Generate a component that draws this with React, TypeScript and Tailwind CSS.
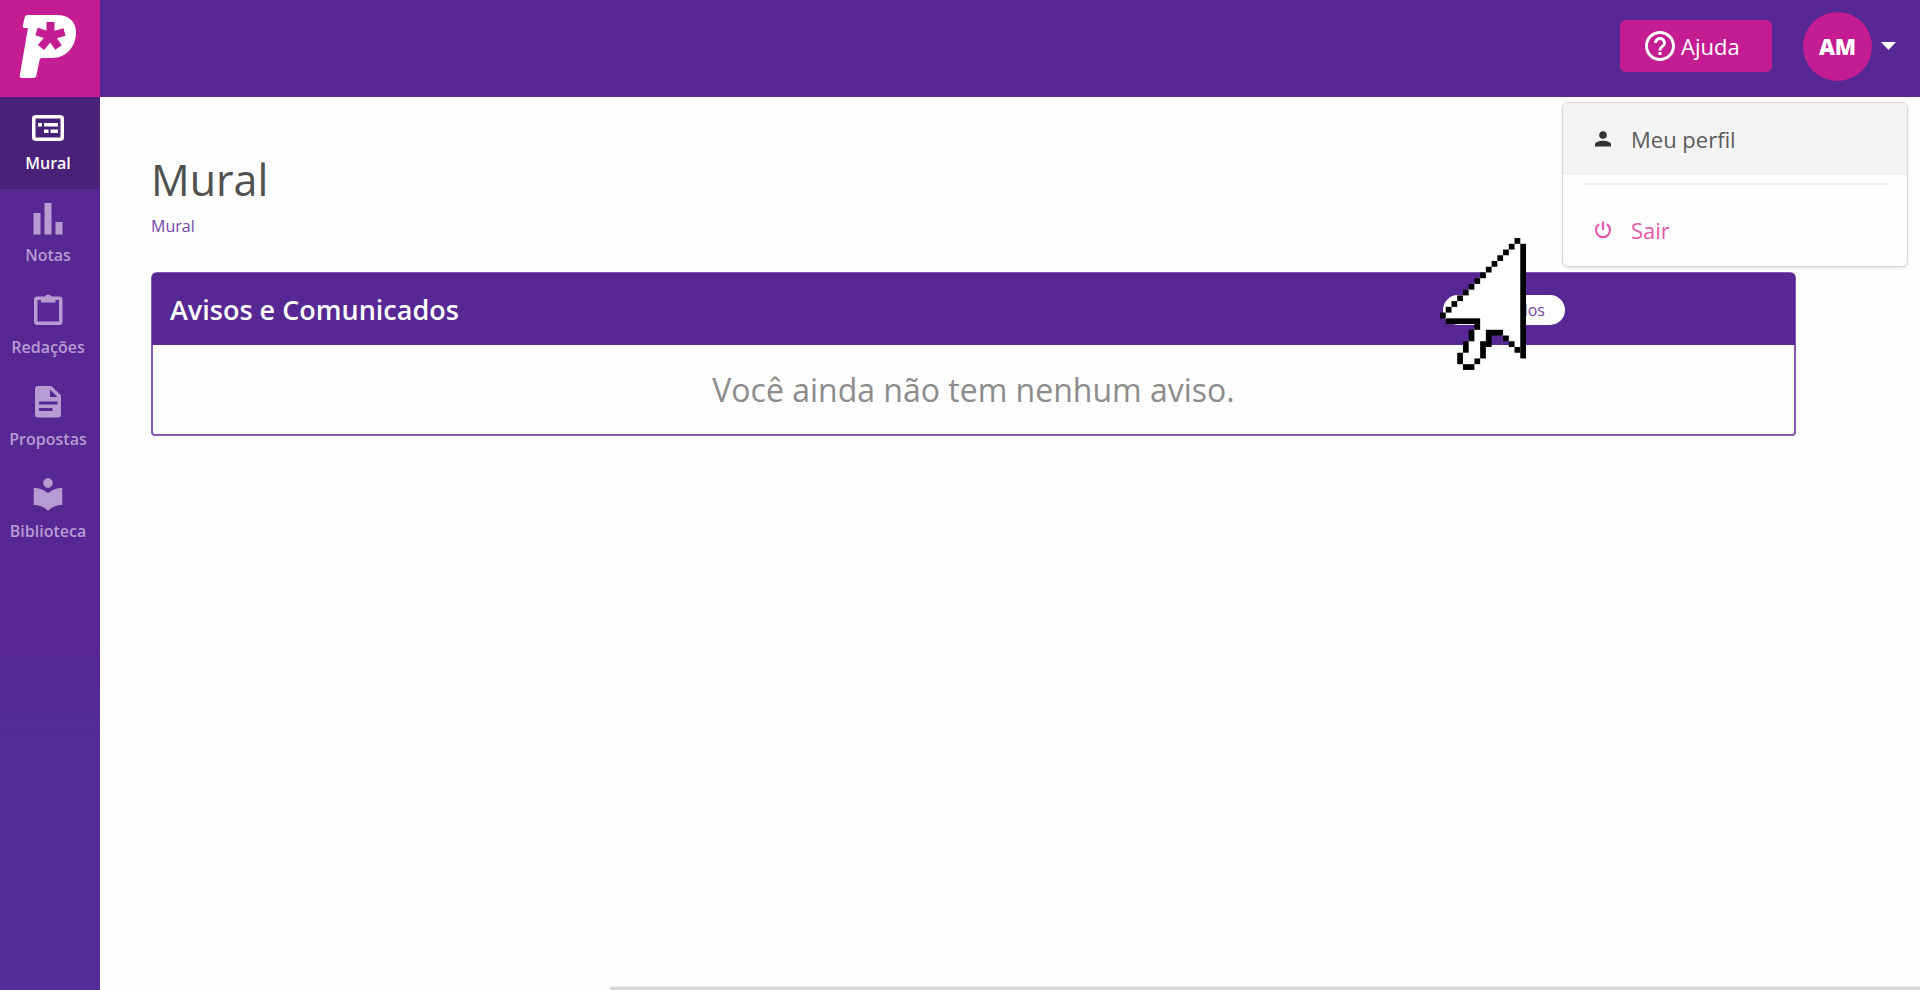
import type { ReactNode } from 'react';
import { MdLocalLibrary, MdHelpOutline } from 'react-icons/md';

const CURSOR_PIXELS: [number, number, number, number][] = [
  ...Array.from({ length: 14 }, (_, row): [number, number, number, number] => [13 - row, row, 1, 1]),
  [14, 1, 1, 20],
  [1, 14, 6, 1],
  [6, 15, 1, 1],
  [5, 16, 1, 2],
  [4, 18, 1, 2],
  [3, 20, 1, 2],
  [4, 22, 2, 1],
  [6, 21, 1, 1],
  [7, 18, 1, 3],
  [8, 16, 1, 3],
  [9, 16, 2, 1],
  [11, 17, 1, 1],
  [12, 18, 1, 1],
  [13, 19, 1, 1],
];

function PixelCursor() {
  return (
    <svg
      className="pointer-events-none absolute top-[238px] right-[394px] z-20 h-[132px] w-[86px]"
      viewBox="0 0 15 23"
      aria-hidden="true"
    >
      <path
        fill="#fff"
        stroke="#fff"
        strokeWidth="0.2"
        d="M13 1L14 1V19H13V18H12V17H11V16H8V18H7V21H6V22H4V20H5V18H6V16H7V14H1V13Z"
      />
      {CURSOR_PIXELS.map(([x, y, w, h]) => (
        <rect key={`${x}-${y}`} x={x} y={y} width={w} height={h} fill="#000" />
      ))}
    </svg>
  );
}

function Logo() {
  return (
    <svg className="h-[97px] w-[100px]" viewBox="0 0 100 97" role="img" aria-label="Logo">
      <path
        fill="#fff"
        d="M28 15H57C69 15 76 22 76 32C76 47 66 58 52 58H42Q40 58 39.500 60L36.500 75Q36 78 33 78H22Q19 78 20 74L28 28H25Q22 28 23 25L24.500 18Q25 15 28 15Z"
      />
      <path
        d="M50.500 36V22M50.500 36L64.500 32M50.500 36L58.500 47.500M50.500 36L41 47.500M50.500 36L36.500 31.500"
        stroke="#c41c93"
        strokeWidth="8"
      />
    </svg>
  );
}

function BoardIcon() {
  return (
    <svg className="size-[38px]" viewBox="0 0 38 38" aria-hidden="true">
      <rect x="4.750" y="9.750" width="28.500" height="22.500" rx="2" fill="none" stroke="currentColor" strokeWidth="3.500" />
      <path fill="currentColor" d="M9 16h4v3.500H9zM15 16h14v3.500H15zM15 22.500h4.500V26H15zM21.500 22.500H29V26h-7.500z" />
    </svg>
  );
}

function BarsIcon() {
  return (
    <svg className="size-[38px]" viewBox="0 0 38 38" aria-hidden="true">
      <path fill="currentColor" d="M4.500 14h7v21.500h-7zM15.500 4h7v31.500h-7zM26.500 23h7v12.500h-7z" />
    </svg>
  );
}

function ClipboardIcon() {
  return (
    <svg className="size-[38px]" viewBox="0 0 38 38" aria-hidden="true">
      <rect x="6.750" y="7.250" width="25" height="25" rx="1.500" fill="none" stroke="currentColor" strokeWidth="3.500" />
      <path
        fill="currentColor"
        fillRule="evenodd"
        d="M12 6h3.500a4 4 0 0 1 7.500 0H26.500v5.500h-14.500zM19.250 5.500a1.500 1.500 0 1 0 .01 0z"
      />
    </svg>
  );
}

function DocumentIcon() {
  return (
    <svg className="size-[38px]" viewBox="0 0 38 38" aria-hidden="true">
      <path
        fill="currentColor"
        fillRule="evenodd"
        d="M9 3H22.500L32 12.500V31.500Q32 34.500 29 34.500H9Q6 34.500 6 31.500V6Q6 3 9 3ZM21 6.500V14H28.500ZM10 18.500V21.500H28.500V18.500ZM10 25V28H23.500V25Z"
      />
    </svg>
  );
}

function PersonIcon() {
  return (
    <svg className="size-6" viewBox="0 0 24 24" aria-hidden="true">
      <circle cx="12" cy="8" r="3.800" fill="#333" />
      <path fill="#333" d="M4 19.500V17.500C4 15 8.500 13.800 12 13.800S20 15 20 17.500V19.500Z" />
    </svg>
  );
}

function PowerIcon() {
  return (
    <svg className="size-6" viewBox="0 0 24 24" fill="none" stroke="currentColor" strokeWidth="2.200" aria-hidden="true">
      <path d="M12 3.500V12M8.200 6.200A7 7 0 1 0 15.800 6.200" />
    </svg>
  );
}

function NavItem({ icon, label, active }: { icon: ReactNode; label: string; active?: boolean }) {
  return (
    <li>
      <a
        href="#"
        aria-current={active ? 'page' : undefined}
        className={
          active
            ? 'flex flex-col items-center bg-[#4a2179] pt-[10px] pr-1 pb-4 text-white'
            : 'flex flex-col items-center pt-[10px] pr-1 pb-4 text-[#b79bd3]'
        }
      >
        {icon}
        <span className="mt-2 text-base leading-5 font-semibold">{label}</span>
      </a>
    </li>
  );
}

export default function App() {
  return (
    <div className="relative flex min-h-screen bg-[#fefefe] font-['Open_Sans','Noto_Sans',sans-serif]">
      <aside className="flex w-[100px] shrink-0 flex-col bg-linear-to-b from-[#572793] from-65% to-[#522d95] to-75%">
        <a href="#" className="block bg-[#c41c93]">
          <Logo />
        </a>
        <nav>
          <ul>
            <NavItem active label="Mural" icon={<BoardIcon />} />
            <NavItem label="Notas" icon={<BarsIcon />} />
            <NavItem label="Redações" icon={<ClipboardIcon />} />
            <NavItem label="Propostas" icon={<DocumentIcon />} />
            <NavItem label="Biblioteca" icon={<MdLocalLibrary size={38} />} />
          </ul>
        </nav>
      </aside>

      <div className="flex min-w-0 flex-1 flex-col">
        <header className="relative flex h-[97px] items-center justify-end bg-[#572793] pr-6 pb-[5px]">
          <button
            type="button"
            className="flex h-[52px] w-[152px] items-center gap-[3px] rounded-md bg-[#c41c93] pl-[22px] text-[22px] text-white"
          >
            <MdHelpOutline size={36} />
            Ajuda
          </button>
          <button
            type="button"
            className="ml-[31px] flex items-center gap-[9px]"
            aria-haspopup="menu"
            aria-expanded="true"
            aria-label="AM"
          >
            <span className="flex size-[69px] items-center justify-center rounded-full bg-[#c41c93] text-[22px] font-extrabold text-white">
              AM
            </span>
            <svg className="h-2 w-[15px]" viewBox="0 0 15 8" aria-hidden="true">
              <path d="M0 0H15L7.500 8Z" fill="#fff" />
            </svg>
          </button>
          <div
            role="menu"
            className="absolute top-[102px] right-3 z-10 w-[346px] overflow-hidden rounded-md border border-[#d9d9d9] bg-[#fefefe] text-[22px] shadow-sm"
          >
            <a
              href="#"
              role="menuitem"
              className="flex h-[72px] items-center gap-4 bg-[#f3f3f3] pl-7 text-[#5c5c5c]"
            >
              <PersonIcon />
              Meu perfil
            </a>
            <hr className="mx-5 mt-2 border-t-2 border-[#efefef]" />
            <a
              href="#"
              role="menuitem"
              className="mt-[9px] flex h-[72px] items-center gap-4 pl-7 text-[#e558a8]"
            >
              <PowerIcon />
              Sair
            </a>
          </div>
        </header>

        <main className="flex-1 pt-[53px] pr-[124px] pl-[51px]">
          <h1 className="text-[43px] leading-[60px] text-[#505050]">Mural</h1>
          <a href="#" className="mt-1 block text-base leading-6 text-[#7446a8]">
            Mural
          </a>
          <section className="mt-[34px] rounded-md rounded-b-sm border-2 border-[#8258b4]">
            <div className="-mx-px -mt-px flex h-[72px] items-center justify-between rounded-t-sm bg-[#572793] pt-[2px] pr-[230px] pl-[18px]">
              <h2 className="text-[27px] font-semibold text-white">Avisos e Comunicados</h2>
              <button
                type="button"
                className="flex h-[30px] w-[122px] items-center justify-end rounded-full bg-white pr-5 text-base text-[#7446a8]"
              >
                Ver todos
              </button>
            </div>
            <p className="pt-6 pb-[23px] text-center text-[32px] leading-[42px] text-[#8c8c8c]">
              Você ainda não tem nenhum aviso.
            </p>
          </section>
        </main>
        <div className="ml-[510px] h-1 border-t border-[#ededed] bg-[#d8d8d8]" />
      </div>
      <PixelCursor />
    </div>
  );
}
